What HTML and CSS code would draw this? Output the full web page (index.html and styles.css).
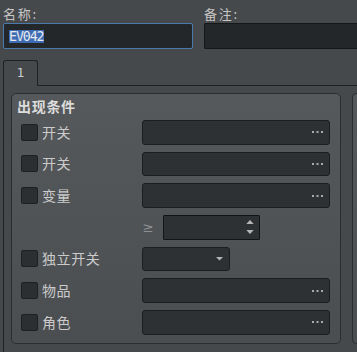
FILE: index.html
```html
<!DOCTYPE html>
<html>
<head>
<meta charset="utf-8">
<link rel="stylesheet" href="styles.css">
</head>
<body>
<div class="top">
  <div class="fset name">
    <div class="lbl">名称:</div>
    <div class="input focus"><span class="sel">EV042</span></div>
  </div>
  <div class="fset note">
    <div class="lbl">备注:</div>
    <div class="input open"></div>
  </div>
</div>
<div class="tabs"><div class="tab">1</div></div>
<div class="pane">
  <div class="group">
    <div class="title">出现条件</div>
    <div class="rows">
      <div class="row">
        <div class="cl"><span class="cb"></span><span class="label">开关</span></div>
        <div class="box"><svg class="dots" width="11" height="2" viewBox="0 0 11 2"><rect x="0" y="0" width="2" height="2"/><rect x="4.5" y="0" width="2" height="2"/><rect x="9" y="0" width="2" height="2"/></svg></div>
      </div>
      <div class="row">
        <div class="cl"><span class="cb"></span><span class="label">开关</span></div>
        <div class="box"><svg class="dots" width="11" height="2" viewBox="0 0 11 2"><rect x="0" y="0" width="2" height="2"/><rect x="4.5" y="0" width="2" height="2"/><rect x="9" y="0" width="2" height="2"/></svg></div>
      </div>
      <div class="row">
        <div class="cl"><span class="cb"></span><span class="label">变量</span></div>
        <div class="box"><svg class="dots" width="11" height="2" viewBox="0 0 11 2"><rect x="0" y="0" width="2" height="2"/><rect x="4.5" y="0" width="2" height="2"/><rect x="9" y="0" width="2" height="2"/></svg></div>
      </div>
      <div class="row">
        <div class="cl"></div>
        <span class="ge">≥</span>
        <div class="spin"><svg class="arrows" width="8" height="14" viewBox="0 0 8 14"><polygon points="0.3,4 4,0 7.7,4"/><polygon points="0.3,10 7.7,10 4,14"/></svg></div>
      </div>
      <div class="row">
        <div class="cl"><span class="cb"></span><span class="label">独立开关</span></div>
        <div class="combo"><svg class="arrow" width="7" height="4" viewBox="0 0 7 4"><polygon points="0,0 7,0 3.5,3.6"/></svg></div>
      </div>
      <div class="row">
        <div class="cl"><span class="cb"></span><span class="label">物品</span></div>
        <div class="box"><svg class="dots" width="11" height="2" viewBox="0 0 11 2"><rect x="0" y="0" width="2" height="2"/><rect x="4.5" y="0" width="2" height="2"/><rect x="9" y="0" width="2" height="2"/></svg></div>
      </div>
      <div class="row">
        <div class="cl"><span class="cb"></span><span class="label">角色</span></div>
        <div class="box"><svg class="dots" width="11" height="2" viewBox="0 0 11 2"><rect x="0" y="0" width="2" height="2"/><rect x="4.5" y="0" width="2" height="2"/><rect x="9" y="0" width="2" height="2"/></svg></div>
      </div>
    </div>
  </div>
  <div class="group group2"></div>
</div>
</body>
</html>
```
FILE: styles.css
```css
* { box-sizing: border-box; }
html, body { margin: 0; padding: 0; }
body {
  width: 357px;
  height: 352px;
  overflow: hidden;
  background: #46494c;
  font-family: "Noto Sans CJK SC", sans-serif;
  color: #c8c8c8;
}
.top {
  display: flex;
  gap: 11px;
  padding: 6px 0 0 3px;
}
.fset {
  display: flex;
  flex-direction: column;
  gap: 1px;
  flex: none;
}
.name { width: 190px; }
.note { width: 153px; }
.lbl {
  height: 16px;
  font-size: 13px;
  line-height: 16px;
  letter-spacing: 1.7px;
  color: #c6c6c6;
}
.input {
  height: 26px;
  border: 1px solid #151718;
  border-radius: 2px;
  background: #24272a;
}
.input.open {
  border-right: none;
  border-radius: 2px 0 0 2px;
}
.input.focus {
  border-color: #4a79aa;
  display: flex;
  align-items: center;
  padding-left: 5px;
}
.sel {
  display: block;
  height: 13.3px;
  background: #3d6cb4;
  color: #e6e9ee;
  font-family: "DejaVu Sans Mono", monospace;
  font-size: 13.3px;
  line-height: 13.3px;
  letter-spacing: -1.1px;
  margin-top: 1px;
}
.tabs {
  display: flex;
  height: 25px;
  margin: 11px 0 0 3px;
  position: relative;
  z-index: 1;
}
.tab {
  width: 35.3px;
  height: 26px;
  border: 1px solid #1f2123;
  border-bottom: none;
  border-radius: 3px 3px 0 0;
  background: #46494c;
  text-align: center;
  font-family: "DejaVu Sans", sans-serif;
  font-size: 12.3px;
  line-height: 24px;
  color: #c9ccd0;
}
.pane {
  display: flex;
  gap: 11px;
  height: 267px;
  overflow: hidden;
  margin-left: 3px;
  border-top: 1px solid #1f2123;
  border-left: 1px solid #1f2123;
  padding: 7px 0 0 7px;
}
.group {
  flex: none;
  width: 330px;
  height: 251px;
  border: 1px solid #2b2d2f;
  border-radius: 5px;
  background: linear-gradient(#56595c, #4b4e51);
  padding-top: 4px;
}
.group2 {
  flex: 1;
  width: auto;
  min-width: 0;
  border-right: none;
  border-radius: 5px 0 0 5px;
}
.title {
  padding-left: 5px;
  margin-bottom: 5px;
  font-size: 14px;
  font-weight: bold;
  line-height: 17px;
  letter-spacing: 0.7px;
  color: #dcdcdc;
}
.rows {
  display: flex;
  flex-direction: column;
  gap: 7px;
  padding-left: 9px;
}
.row {
  display: flex;
  align-items: center;
  height: 24.67px;
}
.cl {
  flex: none;
  width: 121.3px;
  display: flex;
  align-items: center;
}
.cb {
  flex: none;
  width: 17px;
  height: 17px;
  border: 1px solid #1d1f21;
  border-radius: 2px;
  background: #2c2f32;
}
.label {
  margin-left: 4px;
  font-size: 14px;
  line-height: 17px;
  letter-spacing: 0.6px;
  color: #cbcbcb;
}
.box, .combo, .spin {
  flex: none;
  height: 24.67px;
  border: 1px solid #1b1d1f;
  border-radius: 3px;
  background: #2e3134;
  display: flex;
  align-items: center;
  justify-content: flex-end;
}
.box { width: 187.4px; padding-right: 5.4px; }
.combo { width: 87.4px; padding-right: 6px; }
.spin {
  width: 97.4px;
  border-color: #131415;
  border-radius: 1px;
  padding-right: 4.7px;
}
.dots { fill: #a8aaac; }
.arrows, .arrow { fill: #b5b5b5; }
.ge {
  flex: none;
  width: 20.3px;
  font-family: "DejaVu Sans", sans-serif;
  font-size: 13.5px;
  line-height: 16px;
  color: #8d9093;
}
```
